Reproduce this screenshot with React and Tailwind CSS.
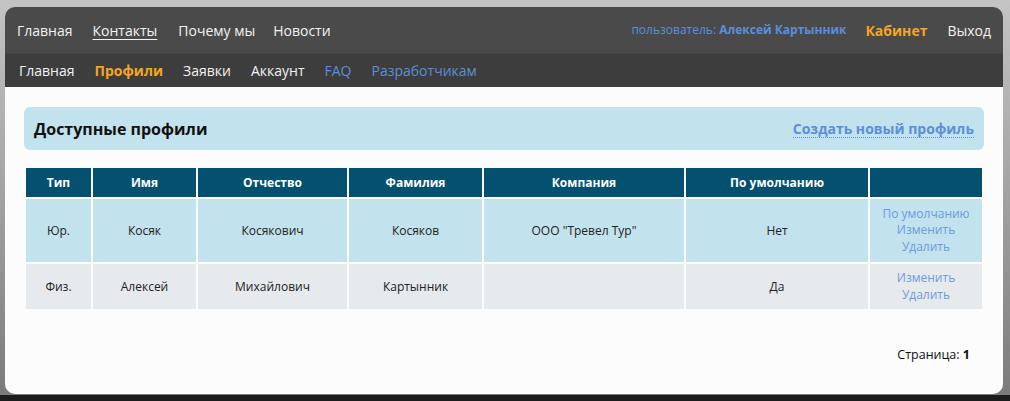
import React from "react";

const font = { fontFamily: '"Open Sans", "Noto Sans", sans-serif' };

const cols = [
  { t: "Тип", w: "w-[65px]" },
  { t: "Имя", w: "w-[103px]" },
  { t: "Отчество", w: "w-[149px]" },
  { t: "Фамилия", w: "w-[133px]" },
  { t: "Компания", w: "w-[200px]" },
  { t: "По умолчанию", w: "w-[182px]" },
  { t: "", w: "w-[112px]" },
];

const rows = [
  {
    bg: "bg-[#c2e2ee]",
    h: "h-[63px]",
    cells: ["Юр.", "Косяк", "Косякович", "Косяков", 'ООО "Тревел Тур"', "Нет"],
    links: ["По умолчанию", "Изменить", "Удалить"],
  },
  {
    bg: "bg-[#e7eaed]",
    h: "h-[45px]",
    cells: ["Физ.", "Алексей", "Михайлович", "Картынник", "", "Да"],
    links: ["Изменить", "Удалить"],
  },
];

export default function App() {
  return (
    <div
      className="w-[1010px] h-[401px] overflow-hidden flex flex-col bg-[linear-gradient(180deg,#c4c4c4_0%,#a9a9a9_40%,#7a7a7a_100%)]"
      style={font}
    >
      <div className="ml-[5px] mt-[7px] w-[998px] rounded-[10px] overflow-hidden flex flex-col">
        {/* top nav */}
        <div className="h-[46px] bg-[#4b4a4a] flex items-center pl-[12px] pr-[12px] text-[14px] text-[#f2f2f2]">
          <div className="flex items-center">
            <span>Главная</span>
            <span className="ml-[20px] underline underline-offset-[3px]">Контакты</span>
            <span className="ml-[21px]">Почему мы</span>
            <span className="ml-[18px]">Новости</span>
          </div>
          <div className="ml-auto flex items-center">
            <span className="text-[12px] text-[#5b8fd8]">
              пользователь: <b className="font-bold">Алексей Картынник</b>
            </span>
            <span className="ml-[19px] font-bold text-[#f5a623]">Кабинет</span>
            <span className="ml-[20px]">Выход</span>
          </div>
        </div>
        {/* sub nav */}
        <div className="h-[34px] bg-[#3d3d3d] flex items-center pl-[14px] gap-[20px] text-[14px] text-[#f2f2f2] border-t border-[#454545]">
          <span>Главная</span>
          <span className="font-bold text-[#f5a623]">Профили</span>
          <span>Заявки</span>
          <span>Аккаунт</span>
          <span className="text-[#5b8fd8]">FAQ</span>
          <span className="text-[#5b8fd8]">Разработчикам</span>
        </div>
        {/* content */}
        <div className="h-[307px] bg-[#fcfcfc] pt-[20px] pl-[19px]">
          <div className="w-[960px] h-[43px] rounded-[6px] bg-[#c2e2ee] flex items-center justify-between px-[10px]">
            <span className="text-[16px] font-bold text-[#111]">Доступные профили</span>
            <span className="text-[14px] font-bold text-[#5b8fd8] border-b border-dotted border-[#5b8fd8] leading-[17px]">
              Создать новый профиль
            </span>
          </div>
          <table className="mt-[16px] w-[960px] border-separate border-spacing-[2px] text-[12px] table-fixed">
            <thead>
              <tr className="h-[29px]">
                {cols.map((c, i) => (
                  <th key={i} className={`${c.w} bg-[#03506f] text-white font-bold text-center p-0`}>
                    {c.t}
                  </th>
                ))}
              </tr>
            </thead>
            <tbody>
              {rows.map((r, ri) => (
                <tr key={ri} className={r.h}>
                  {r.cells.map((c, ci) => (
                    <td key={ci} className={`${r.bg} text-center text-[#222] p-0`}>
                      {c}
                    </td>
                  ))}
                  <td className={`${r.bg} text-center p-0`}>
                    <div className="flex flex-col items-center text-[#6b9be0] leading-[16.5px]">
                      {r.links.map((l) => (
                        <span key={l}>{l}</span>
                      ))}
                    </div>
                  </td>
                </tr>
              ))}
            </tbody>
          </table>
          <div className="w-[946px] mt-[35px] text-right text-[12.5px] text-[#111]">
            Страница: <b>1</b>
          </div>
        </div>
      </div>
      <div className="flex-1 mt-[1px] bg-[#1c1c1c]"></div>
    </div>
  );
}
